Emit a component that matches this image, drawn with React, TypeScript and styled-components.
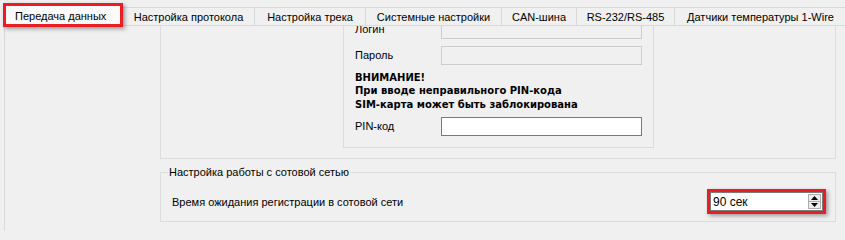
import React from "react";
import styled, { createGlobalStyle } from "styled-components";

const GlobalStyle = createGlobalStyle`
  html, body {
    margin: 0;
    padding: 0;
    background: #f0f0f0;
    overflow: hidden;
  }
  body {
    font-family: "Liberation Sans", Arial, sans-serif;
    font-size: 11px;
    color: #000;
  }
`;

// ширина вкладок как в оригинальном окне
const tabs = [
  { title: "Передача данных", width: 120 },
  { title: "Настройка протокола", width: 132 },
  { title: "Настройка трека", width: 111 },
  { title: "Системные настройки", width: 136 },
  { title: "CAN-шина", width: 75 },
  { title: "RS-232/RS-485", width: 98 },
  { title: "Датчики температуры 1-Wire", width: 172 },
];

function App() {
  return (
    <Window>
      <GlobalStyle />
      <TabBar>
        {tabs.map((t, i) => (
          <Tab key={t.title} active={i === 0} w={t.width}>
            {t.title}
          </Tab>
        ))}
      </TabBar>
      <Pane>
        <Content>
          {/* логин / пароль / PIN, верх прокручен за край */}
          <Group>
            <InnerGroup>
              <Row>
                <Label>Логин</Label>
                <Input disabled />
              </Row>
              <Row>
                <Label>Пароль</Label>
                <Input disabled />
              </Row>
              <Warning>
                ВНИМАНИЕ!
                <br />
                При вводе неправильного PIN-кода
                <br />
                SIM-карта может быть заблокирована
              </Warning>
              <Row>
                <Label>PIN-код</Label>
                <Input />
              </Row>
            </InnerGroup>
          </Group>

          <CellGroup>
            <CellLegend>Настройка работы с сотовой сетью</CellLegend>
            <CellRow>
              <span>Время ожидания регистрации в сотовой сети</span>
              <Highlight>
                <SpinBox>
                  <SpinValue>90 сек</SpinValue>
                  <SpinButtons>
                    <SpinButton>
                      <svg width="7" height="4" viewBox="0 0 7 4">
                        <path d="M3.5 0 L7 4 L0 4 Z" fill="#000" />
                      </svg>
                    </SpinButton>
                    <SpinButton>
                      <svg width="7" height="4" viewBox="0 0 7 4">
                        <path d="M0 0 L7 0 L3.5 4 Z" fill="#000" />
                      </svg>
                    </SpinButton>
                  </SpinButtons>
                </SpinBox>
              </Highlight>
            </CellRow>
          </CellGroup>
        </Content>
      </Pane>
    </Window>
  );
}

const Window = styled.div`
  width: 845px;
  height: 231px;
  display: flex;
  flex-direction: column;
`;

const TabBar = styled.div`
  display: flex;
  align-items: flex-end;
  height: 18px;
  margin-top: 7px;
  padding-left: 3px;
  white-space: nowrap;
`;

const Tab = styled.div<{ active?: boolean; w: number }>`
  box-sizing: border-box;
  display: flex;
  align-items: center;
  justify-content: ${(p) => (p.active ? "flex-start" : "center")};
  flex-shrink: 0;
  width: ${(p) => p.w}px;
  height: ${(p) => (p.active ? "24px" : "18px")};
  padding: ${(p) => (p.active ? "1px 0 0 9px" : "1px 0 0")};
  margin-bottom: ${(p) => (p.active ? "-2px" : "0")};
  background: ${(p) => (p.active ? "#fbfbfb" : "#f0f0f0")};
  border: ${(p) => (p.active ? "3px solid #ea1c24" : "none")};
  border-top: ${(p) => (p.active ? "3px solid #ea1c24" : "1px solid #d9d9d9")};
  border-right: ${(p) => (p.active ? "3px solid #ea1c24" : "1px solid #d9d9d9")};
  box-shadow: ${(p) => (p.active ? "2px 2px 4px rgba(0, 0, 0, 0.35)" : "none")};
  position: ${(p) => (p.active ? "relative" : "static")};
  z-index: ${(p) => (p.active ? 2 : 0)};
`;

const Pane = styled.div`
  flex: 1;
  margin-left: 4px;
  border-left: 1px solid #d9d9d9;
  border-top: 1px solid #d9d9d9;
  overflow: hidden;
  display: flex;
  flex-direction: column;
  justify-content: flex-end;
`;

const Content = styled.div`
  padding: 0 0 9px 155px;
  display: flex;
  flex-direction: column;
`;

const Group = styled.fieldset`
  width: 676px;
  box-sizing: border-box;
  margin: 0;
  padding: 10px 0 10px 182px;
  border: 1px solid #dcdcdc;
`;

const Legend = styled.legend`
  margin-left: 6px;
  padding: 0 1px;
  line-height: 13px;
`;

const CellLegend = styled(Legend)`
  margin-left: -4px;
`;

const InnerGroup = styled.fieldset`
  width: 311px;
  box-sizing: border-box;
  margin: 0;
  padding: 10px 10px 11px 11px;
  border: 1px solid #dcdcdc;
  display: flex;
  flex-direction: column;
  gap: 7px;
`;

const Row = styled.div`
  display: grid;
  grid-template-columns: 86px 201px;
  align-items: center;
`;

const Label = styled.span`
  line-height: 13px;
`;

const Input = styled.input`
  box-sizing: border-box;
  height: 19px;
  margin: 0;
  border: 1px solid #7a7a7a;
  background: #fff;
  &:disabled {
    border-color: #cccccc;
    background: #f0f0f0;
  }
`;

const Warning = styled.div`
  font-family: "DejaVu Sans", Verdana, sans-serif;
  font-size: 10px;
  font-weight: bold;
  line-height: 13.5px;
  margin: -1px 0 -1px;
`;

const CellGroup = styled.fieldset`
  width: 676px;
  box-sizing: border-box;
  margin: 7px 0 0;
  padding: 13px 12px 10px 11px;
  border: 1px solid #dcdcdc;
`;

const CellRow = styled.div`
  display: flex;
  align-items: center;
  justify-content: space-between;
`;

const Highlight = styled.div`
  border: 3px solid #ea1c24;
  margin: -3px -3px -3px 0;
  box-shadow: 2px 2px 4px rgba(0, 0, 0, 0.35);
  display: flex;
`;

const SpinBox = styled.div`
  box-sizing: border-box;
  width: 113px;
  height: 19px;
  border: 1px solid #7a7a7a;
  background: #fff;
  display: flex;
  align-items: center;
  padding: 1px;
`;

const SpinValue = styled.span`
  flex: 1;
  padding-left: 1px;
  font-size: 12px;
`;

const SpinButtons = styled.div`
  display: flex;
  flex-direction: column;
  width: 13px;
  height: 15px;
`;

const SpinButton = styled.div`
  flex: 1;
  display: flex;
  align-items: center;
  justify-content: center;
  background: #ececec;
  border: 1px solid #adadad;
  & + & {
    border-top: none;
  }
`;

export default App;
